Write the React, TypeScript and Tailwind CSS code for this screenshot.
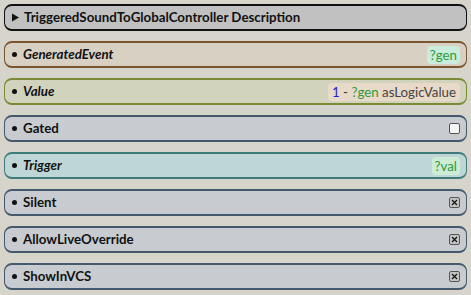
import React from "react";

type Row = {
  label: string;
  italic?: boolean;
  border: string;
  bg: string;
  right?: React.ReactNode;
};

const Check = ({ checked }: { checked: boolean }) => (
  <div
    className={
      "w-[11px] h-[11px] border border-[#555] rounded-[2px] flex items-center justify-center " +
      (checked ? "bg-[#c4c4c4]" : "bg-[#f4f4f4]")
    }
  >
    {checked && (
      <svg width="7" height="7" viewBox="0 0 7 7">
        <path d="M1 1L6 6M6 1L1 6" stroke="#111" strokeWidth="1.2" />
      </svg>
    )}
  </div>
);

const Badge = ({ text, bg }: { text: string; bg: string }) => (
  <span className={"px-[3px] rounded-[4px] text-[#2c9a3c] font-normal leading-[18px] " + bg}>{text}</span>
);

export default function App() {
  const rows: Row[] = [
    {
      label: "GeneratedEvent",
      italic: true,
      border: "border-[#7b5530]",
      bg: "bg-[#d9d0c4]",
      right: <Badge text="?gen" bg="bg-[#c9ecdc]" />,
    },
    {
      label: "Value",
      italic: true,
      border: "border-[#7b8a35]",
      bg: "bg-[#d1d3bd]",
      right: (
        <span className="px-[4px] rounded-[4px] bg-[#e8d9c9] font-normal leading-[18px]">
          <span className="text-[#2222dd]">1</span>
          <span className="text-[#333]"> - </span>
          <span className="text-[#2c9a3c]">?gen</span>
          <span className="text-[#444]"> asLogicValue</span>
        </span>
      ),
    },
    { label: "Gated", border: "border-[#45596c]", bg: "bg-[#c8ccd0]", right: <Check checked={false} /> },
    {
      label: "Trigger",
      italic: true,
      border: "border-[#3f7b78]",
      bg: "bg-[#bed6d6]",
      right: <Badge text="?val" bg="bg-[#ccecd6]" />,
    },
    { label: "Silent", border: "border-[#45596c]", bg: "bg-[#c8ccd0]", right: <Check checked /> },
    { label: "AllowLiveOverride", border: "border-[#45596c]", bg: "bg-[#c8ccd0]", right: <Check checked /> },
    { label: "ShowInVCS", border: "border-[#45596c]", bg: "bg-[#c8ccd0]", right: <Check checked /> },
  ];

  return (
    <div
      className="w-[471px] h-[295px] bg-[#d6d4cb] pt-[4px] px-[4px] flex flex-col gap-[10px] text-[13.3px] font-bold text-[#111]"
      style={{ fontFamily: "Lato, 'Liberation Sans', sans-serif" }}
    >
      <div className="h-[27px] shrink-0 rounded-[8px] border-x border-y-2 border-[#111] bg-[#c1c1c1] flex items-center pl-[6px] pr-[6px]">
        <svg width="9" height="9" viewBox="0 0 9 9" className="mr-[4px]">
          <path d="M1 0.5L8 4.5L1 8.5Z" fill="#111" />
        </svg>
        <span>TriggeredSoundToGlobalController Description</span>
      </div>
      {rows.map((r) => (
        <div
          key={r.label}
          className={
            "h-[27px] shrink-0 rounded-[8px] border-x border-y-2 flex items-center pl-[7px] pr-[6px] " +
            r.border +
            " " +
            r.bg
          }
        >
          <div className="w-[5px] h-[5px] rounded-full bg-[#111] mr-[6px]" />
          <span className={r.italic ? "italic" : ""}>{r.label}</span>
          <div className="ml-auto flex items-center">{r.right}</div>
        </div>
      ))}
    </div>
  );
}
